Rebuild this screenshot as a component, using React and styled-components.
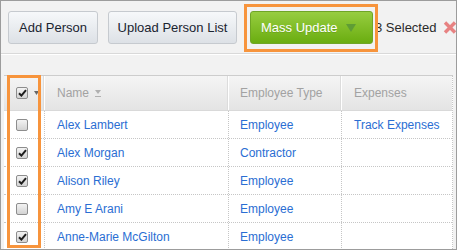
import React from "react";
import styled, { createGlobalStyle } from "styled-components";

const Global = createGlobalStyle`
  html, body { margin: 0; padding: 0; }
  body { font-family: "Liberation Sans", Arial, sans-serif; }
`;

const Frame = styled.div`
  width: 457px;
  height: 250px;
  box-sizing: border-box;
  border: 1px solid #9c9c9c;
  background: #f2f2f2;
  overflow: hidden;
  font-family: "Liberation Sans", Arial, sans-serif;
  font-size: 13px;
`;

const Toolbar = styled.div`
  display: flex;
  align-items: center;
  padding: 10px 0 9px 7px;
  border-bottom: 1px solid #d9d9d9;
  box-shadow: 0 1px 0 #fff;
  & > * { flex-shrink: 0; }
`;

const Button = styled.button`
  box-sizing: border-box;
  height: 33px;
  width: ${(p) => p.$w}px;
  margin-left: ${(p) => p.$ml || 0}px;
  padding: 0;
  border: 1px solid #c6cacf;
  border-radius: 3px;
  background: linear-gradient(#f6f8fa, #dde1e6);
  color: #1a2430;
  font-family: inherit;
  font-size: 13px;
  display: flex;
  align-items: center;
  justify-content: center;
  white-space: nowrap;
`;

const MassWrap = styled.div`
  position: relative;
  margin-left: 13px;
`;

const MassButton = styled.button`
  box-sizing: border-box;
  height: 33px;
  width: 123px;
  padding: 0 0 0 10px;
  border: 1px solid #6fa526;
  border-radius: 3px;
  background: linear-gradient(#97cd40, #6aad10);
  color: #fff;
  font-family: inherit;
  font-size: 13px;
  display: flex;
  align-items: center;
  gap: 8px;
  text-shadow: 0 1px 0 rgba(0, 0, 0, 0.12);
  white-space: nowrap;
`;

const Highlight = styled.div`
  position: absolute;
  top: ${(p) => p.$t}px;
  left: ${(p) => p.$l}px;
  width: ${(p) => p.$w}px;
  height: ${(p) => p.$h}px;
  box-sizing: border-box;
  border: 3px solid #f7943c;
  pointer-events: none;
  z-index: 2;
`;

const Selected = styled.span`
  margin-left: 2px;
  color: #2b2b2b;
  white-space: nowrap;
`;

const Clear = styled.svg`
  margin-left: 7px;
`;

const Table = styled.div`
  position: relative;
  margin: 21px 3px 0;
  border-top: 1px solid #cdcdcd;
  border-right: 1px dotted #c6c6c6;
  background: #fff;
  font-size: 12px;
`;

const cols = "40px 184px 113px 1fr";

const HeadRow = styled.div`
  display: grid;
  grid-template-columns: ${cols};
  height: 35px;
  box-sizing: border-box;
  background: linear-gradient(#f5f5f5, #e4e4e4);
  border-bottom: 1px solid #d9d9d9;
`;

const HeadCell = styled.div`
  display: flex;
  align-items: center;
  padding-left: ${(p) => p.$pl}px;
  color: #a2a2a2;
  border-left: ${(p) => (p.$first ? "none" : "1px solid #fff")};
  box-shadow: ${(p) => (p.$first ? "none" : "-1px 0 0 #dcdcdc")};
  gap: ${(p) => p.$gap || 0}px;
`;

const Row = styled.div`
  display: grid;
  grid-template-columns: ${cols};
  height: 28px;
  box-sizing: border-box;
  border-bottom: 1px dotted #c6c6c6;
`;

const Cell = styled.div`
  display: flex;
  align-items: center;
  padding-left: ${(p) => p.$pl}px;
  border-left: ${(p) => (p.$first ? "none" : "1px dotted #c6c6c6")};
  color: #2a6ed3;
  white-space: nowrap;
`;

const Box = styled.span`
  width: 12px;
  height: 12px;
  box-sizing: border-box;
  border: 1px solid #8d8d8d;
  border-radius: 2px;
  background: linear-gradient(#f3f3f3, #d3d3d3);
  display: flex;
  align-items: center;
  justify-content: center;
`;

const Check = ({ checked }) => (
  <Box>
    {checked && (
      <svg width="9" height="8" viewBox="0 0 9 8">
        <path d="M1 4.2 L3.4 6.6 L8 1.2" stroke="#1e1e1e" strokeWidth="2" fill="none" />
      </svg>
    )}
  </Box>
);

const rows = [
  { name: "Alex Lambert", type: "Employee", exp: "Track Expenses", checked: false },
  { name: "Alex Morgan", type: "Contractor", exp: "", checked: true },
  { name: "Alison Riley", type: "Employee", exp: "", checked: true },
  { name: "Amy E Arani", type: "Employee", exp: "", checked: false },
  { name: "Anne-Marie McGilton", type: "Employee", exp: "", checked: true },
];

export default function App() {
  return (
    <>
      <Global />
      <Frame>
        <Toolbar>
          <Button $w={90}>Add Person</Button>
          <Button $w={129} $ml={10}>Upload Person List</Button>
          <MassWrap>
            <MassButton>
              Mass Update
              <svg width="10" height="8" viewBox="0 0 10 8">
                <polygon points="0,0 10,0 5,8" fill="#5f9d35" />
              </svg>
            </MassButton>
            <Highlight $t={-7} $l={-6} $w={134} $h={48} />
          </MassWrap>
          <Selected>3 Selected</Selected>
          <Clear width="14" height="13" viewBox="0 0 14 13">
            <path d="M2 1.5 L12 11.5 M12 1.5 L2 11.5" stroke="#e78282" strokeWidth="3.4" />
          </Clear>
        </Toolbar>
        <Table>
          <HeadRow>
            <HeadCell $first $pl={12} $gap={6}>
              <Check checked />
              <svg width="5" height="4" viewBox="0 0 5 4">
                <polygon points="0,0 5,0 2.5,4" fill="#666" />
              </svg>
            </HeadCell>
            <HeadCell $pl={12} $gap={6}>
              Name
              <svg width="6" height="8" viewBox="0 0 6 8">
                <polygon points="0,1 6,1 3,5" fill="#b0b0b0" />
                <rect x="0" y="7" width="6" height="1" fill="#b0b0b0" />
              </svg>
            </HeadCell>
            <HeadCell $pl={11}>Employee Type</HeadCell>
            <HeadCell $pl={12}>Expenses</HeadCell>
          </HeadRow>
          {rows.map((r) => (
            <Row key={r.name}>
              <Cell $first $pl={12}>
                <Check checked={r.checked} />
              </Cell>
              <Cell $pl={12}>{r.name}</Cell>
              <Cell $pl={11}>{r.type}</Cell>
              <Cell $pl={12}>{r.exp}</Cell>
            </Row>
          ))}
          <Highlight $t={-1} $l={3} $w={34} $h={173} />
        </Table>
      </Frame>
    </>
  );
}
